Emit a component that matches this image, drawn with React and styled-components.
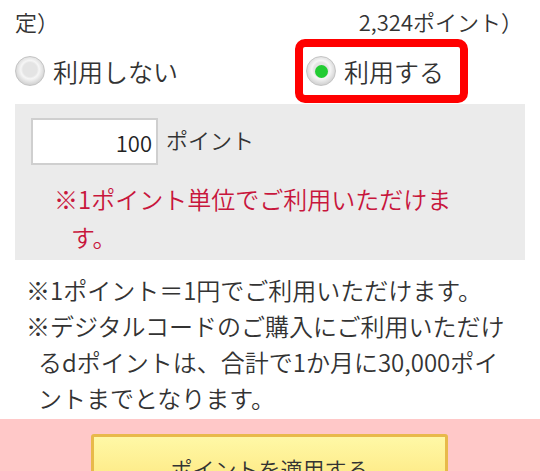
import React, { useState } from 'react';
import styled, { createGlobalStyle } from 'styled-components';

const GlobalStyle = createGlobalStyle`
  html, body {
    margin: 0;
    padding: 0;
    background: #fff;
  }
  body {
    font-family: "Noto Sans CJK JP", "Noto Sans", sans-serif;
    font-weight: 350;
    color: #333;
    overflow: hidden;
  }
`;

const App = () => {
  const [usePoint, setUsePoint] = useState(true);
  const [amount, setAmount] = useState('100');

  return (
    <>
      <GlobalStyle />
      <StPage>
        <StTopLine>
          <span>定）</span>
          <span>2,324ポイント）</span>
        </StTopLine>

        <StRadioRow>
          <StOption onClick={() => setUsePoint(false)}>
            <StRadio $checked={!usePoint} />
            利用しない
          </StOption>
          <StHighlight>
            <StOption onClick={() => setUsePoint(true)}>
              <StRadio $checked={usePoint} />
              利用する
            </StOption>
          </StHighlight>
        </StRadioRow>

        <StPanel>
          <StInputRow>
            <StInput value={amount} onChange={e => setAmount(e.target.value)} />
            <StUnit>ポイント</StUnit>
          </StInputRow>
          <StWarning>※1ポイント単位でご利用いただけます。</StWarning>
        </StPanel>

        <StNotes>
          <p>※1ポイント＝1円でご利用いただけます。</p>
          <p>※デジタルコードのご購入にご利用いただけるdポイントは、合計で1か月に30,000ポイントまでとなります。</p>
        </StNotes>

        <StFooter>
          <StApplyButton>ポイントを適用する</StApplyButton>
        </StFooter>
      </StPage>
    </>
  );
};

export default App;

const StPage = styled.div`
  width: 540px;
  height: 471px;
  overflow: hidden;
`;

const StTopLine = styled.div`
  display: flex;
  justify-content: space-between;
  padding: 3px 17px 0 15px;
  font-size: 22px;
  line-height: 36px;
`;

const StRadioRow = styled.div`
  display: grid;
  grid-template-columns: 280px 1fr;
  align-items: center;
  padding: 0 15px 0 15px;
  height: 64px;
`;

const StOption = styled.label`
  display: flex;
  align-items: center;
  gap: 8px;
  font-size: 25px;
  line-height: 34px;
  color: #333;
  cursor: pointer;
`;

const StRadio = styled.span`
  position: relative;
  width: 30px;
  height: 30px;
  border-radius: 50%;
  box-sizing: border-box;
  border: 1px solid #c4c4c4;
  background: radial-gradient(circle at 50% 45%, #e4e4e4 0 34%, #f6f6f6 44%, #d6d6d6 70%, #bdbdbd 100%);
  flex-shrink: 0;

  &::after {
    content: '';
    position: absolute;
    left: 50%;
    top: 50%;
    width: 13px;
    height: 13px;
    margin: -6.5px 0 0 -6.5px;
    border-radius: 50%;
    background: ${p => (p.$checked ? '#22cc33' : 'transparent')};
  }
`;

const StHighlight = styled.div`
  justify-self: start;
  border: 8px solid #ff0000;
  border-radius: 10px;
  padding: 7px 16px 7px 3px;
`;

const StPanel = styled.div`
  margin: 1px 15px 0 15px;
  background: #ebebeb;
  padding: 14px 0 4px 16px;
`;

const StInputRow = styled.div`
  display: flex;
  align-items: center;
  gap: 8px;
`;

const StInput = styled.input`
  width: 127px;
  height: 47px;
  box-sizing: border-box;
  border: 2px solid #cfcfcf;
  background: #fff;
  text-align: right;
  padding: 0 4px;
  font-family: "Noto Sans CJK JP", "Noto Sans", sans-serif;
  font-weight: 350;
  font-size: 22px;
  color: #222;
  outline: none;
`;

const StUnit = styled.span`
  font-size: 22px;
  margin-top: -6px;
  color: #333;
`;

const StWarning = styled.p`
  margin: 15px 0 0 0;
  padding: 0 50px 0 40px;
  text-indent: -17px;
  font-size: 24px;
  line-height: 38px;
  color: #c8163c;
`;

const StNotes = styled.div`
  padding: 12px 22px 0 38px;
  font-size: 24px;
  line-height: 36px;
  color: #333;

  & p {
    margin: 0;
    text-indent: -12px;
  }
`;

const StFooter = styled.div`
  margin-top: 3px;
  background: #ffc8c8;
  padding: 15px 0 0 91px;
  height: 60px;
`;

const StApplyButton = styled.button`
  width: 357px;
  height: 60px;
  box-sizing: border-box;
  border: 3px solid #e8b94a;
  border-radius: 3px;
  background: linear-gradient(#fff8a6, #fde67d);
  font-family: "Noto Sans CJK JP", "Noto Sans", sans-serif;
  font-weight: 350;
  font-size: 22px;
  color: #333;
  padding: 8px 0 0 0;
  cursor: pointer;
`;
